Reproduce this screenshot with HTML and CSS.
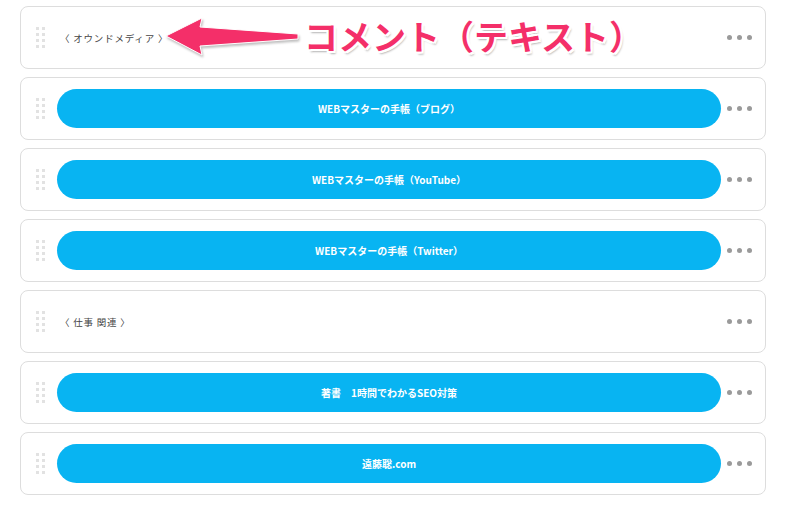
FILE: index.html
```html
<!DOCTYPE html>
<html lang="ja">
<head>
    <meta charset="UTF-8">
    <title>リンク一覧</title>
    <link rel="stylesheet" href="styles.css">
</head>
<body>

    <div class="link-list">
        <div class="link-card">
            <span class="handle"><i></i><i></i><i></i><i></i><i></i><i></i><i></i><i></i></span>
            <div class="comment">〈 オウンドメディア 〉</div>
            <span class="more"><i></i><i></i><i></i></span>
        </div>
        <div class="link-card">
            <span class="handle"><i></i><i></i><i></i><i></i><i></i><i></i><i></i><i></i></span>
            <a class="link-button">WEBマスターの手帳（ブログ）</a>
            <span class="more"><i></i><i></i><i></i></span>
        </div>
        <div class="link-card">
            <span class="handle"><i></i><i></i><i></i><i></i><i></i><i></i><i></i><i></i></span>
            <a class="link-button">WEBマスターの手帳（YouTube）</a>
            <span class="more"><i></i><i></i><i></i></span>
        </div>
        <div class="link-card">
            <span class="handle"><i></i><i></i><i></i><i></i><i></i><i></i><i></i><i></i></span>
            <a class="link-button">WEBマスターの手帳（Twitter）</a>
            <span class="more"><i></i><i></i><i></i></span>
        </div>
        <div class="link-card">
            <span class="handle"><i></i><i></i><i></i><i></i><i></i><i></i><i></i><i></i></span>
            <div class="comment">〈 仕事 関連 〉</div>
            <span class="more"><i></i><i></i><i></i></span>
        </div>
        <div class="link-card">
            <span class="handle"><i></i><i></i><i></i><i></i><i></i><i></i><i></i><i></i></span>
            <a class="link-button">著書　1時間でわかるSEO対策</a>
            <span class="more"><i></i><i></i><i></i></span>
        </div>
        <div class="link-card">
            <span class="handle"><i></i><i></i><i></i><i></i><i></i><i></i><i></i><i></i></span>
            <a class="link-button">遠藤聡.com</a>
            <span class="more"><i></i><i></i><i></i></span>
        </div>
    </div>

    <!-- annotation overlay -->
    <div class="note">
        <svg class="note-arrow" width="140" height="44" viewBox="0 0 140 44">
            <path d="M2 22 L38 4 L36 13 L134 20 L134 25 L36 32 L38 41 Z" fill="#f42f69" stroke="#fff" stroke-width="1"/>
        </svg>
        <span class="note-text">コメント（テキスト）</span>
    </div>

</body>
</html>
```

FILE: styles.css
```css
body {
    margin: 0;
    background-color: #ffffff;
    font-family: "Noto Sans CJK JP", "Liberation Sans", sans-serif;
    position: relative;
}

.link-list {
    display: flex;
    flex-direction: column;
    gap: 8px;
    padding: 6px 34px 0 20px;
}

.link-card {
    display: flex;
    align-items: center;
    height: 61px;
    padding: 0 13px 0 15px;
    border: 1px solid #dddddd;
    border-radius: 8px;
    background-color: #ffffff;
}

/* drag handle */
.handle {
    display: grid;
    grid-template-columns: 3px 3px;
    grid-auto-rows: 3px;
    gap: 3px;
    width: 9px;
    margin-right: 12px;
}

.handle i {
    background-color: #e2e2e2;
}

.comment {
    flex: 1;
    padding-left: 3px;
    font-size: 9.5px;
    color: #444444;
    letter-spacing: 0.8px;
}

.link-button {
    flex: 1;
    height: 39px;
    line-height: 39px;
    border-radius: 20px;
    background-color: #08b4f2;
    color: #ffffff;
    font-size: 10px;
    font-weight: bold;
    text-align: center;
}

/* three-dot menu */
.more {
    display: flex;
    gap: 5px;
    margin-left: 6px;
}

.more i {
    width: 5px;
    height: 5px;
    border-radius: 50%;
    background-color: #9a9a9a;
}

/* Annotation */
.note {
    position: absolute;
    top: 14px;
    left: 164px;
    display: flex;
    align-items: center;
}

.note-arrow {
    filter: drop-shadow(1px 2px 1px rgba(0, 0, 0, 0.25));
}

.note-text {
    font-size: 34px;
    font-weight: bold;
    line-height: 44px;
    color: #f42f69;
    text-shadow: -2px -2px 0 #fff, 2px -2px 0 #fff, -2px 2px 0 #fff, 2px 2px 0 #fff,
                 0 -2px 0 #fff, 0 2px 0 #fff, -2px 0 0 #fff, 2px 0 0 #fff,
                 2px 3px 2px rgba(0, 0, 0, 0.3);
}
```
